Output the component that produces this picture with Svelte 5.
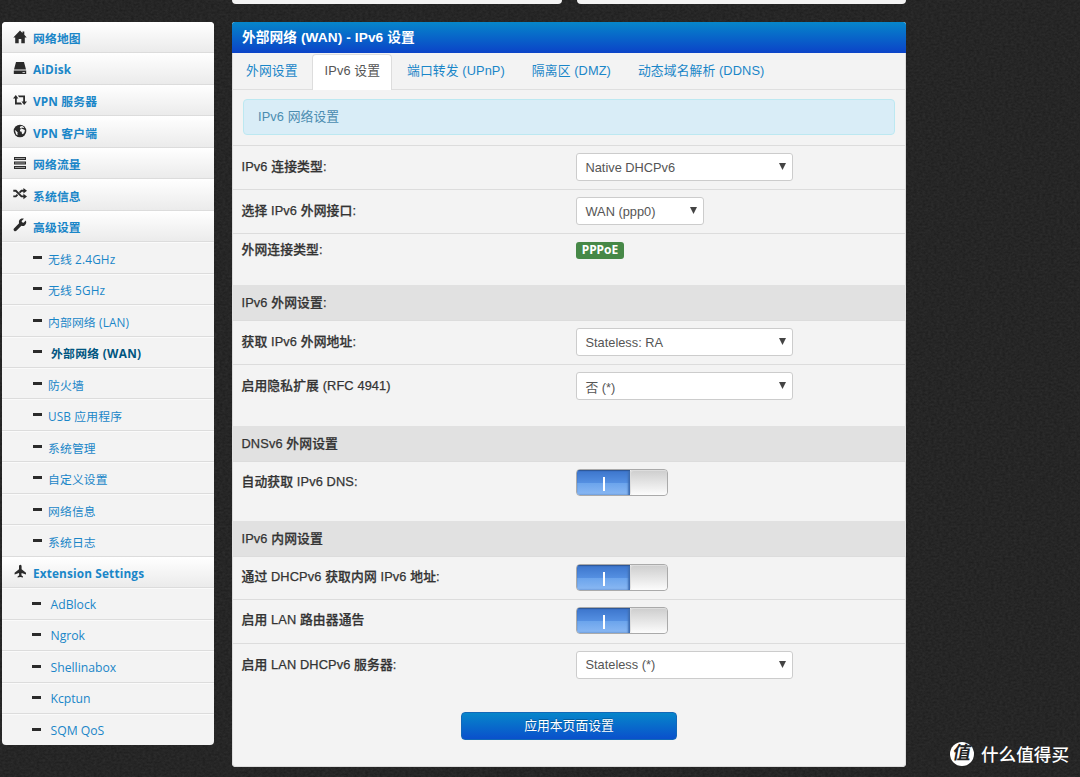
<script>
  const menu = [
    { icon: 'home', label: '网络地图' },
    { icon: 'hdd', label: 'AiDisk' },
    { icon: 'retweet', label: 'VPN 服务器' },
    { icon: 'globe', label: 'VPN 客户端' },
    { icon: 'tasks', label: '网络流量' },
    { icon: 'random', label: '系统信息' },
    { icon: 'wrench', label: '高级设置' }
  ];

  const advanced = [
    '无线 2.4GHz',
    '无线 5GHz',
    '内部网络 (LAN)',
    '外部网络 (WAN)',
    '防火墙',
    'USB 应用程序',
    '系统管理',
    '自定义设置',
    '网络信息',
    '系统日志'
  ];

  const extensions = ['AdBlock', 'Ngrok', 'Shellinabox', 'Kcptun', 'SQM QoS'];

  const tabs = ['外网设置', 'IPv6 设置', '端口转发 (UPnP)', '隔离区 (DMZ)', '动态域名解析 (DDNS)'];

  const groups = [
    {
      name: 'type',
      rows: [
        { label: 'IPv6 连接类型:', select: 'Native DHCPv6' },
        { label: '选择 IPv6 外网接口:', select: 'WAN (ppp0)', short: true },
        { label: '外网连接类型:', badge: 'PPPoE' }
      ]
    },
    {
      name: 'wan',
      title: 'IPv6 外网设置:',
      rows: [
        { label: '获取 IPv6 外网地址:', select: 'Stateless: RA' },
        { label: '启用隐私扩展 (RFC 4941)', select: '否 (*)' }
      ]
    },
    {
      name: 'dns',
      title: 'DNSv6 外网设置',
      rows: [{ label: '自动获取 IPv6 DNS:', toggle: true }]
    },
    {
      name: 'lan',
      title: 'IPv6 内网设置',
      rows: [
        { label: '通过 DHCPv6 获取内网 IPv6 地址:', toggle: true },
        { label: '启用 LAN 路由器通告', toggle: true },
        { label: '启用 LAN DHCPv6 服务器:', select: 'Stateless (*)' }
      ]
    }
  ];
</script>

{#snippet icon(name)}
  <svg class="icon" viewBox="0 0 14 14">
    {#if name === 'home'}
      <path d="M7 .5 .3 7.4h1.9v5.9h3.5V9h2.6v4.3h3.5V7.4h1.9L11.3 4.8V1.5H9.5V3z" />
    {:else if name === 'hdd'}
      <path d="M3 1h8l2 7.6H1zM.8 9.4h12.4V13H.8z" />
      <path class="cut" d="M9.5 11h2.4v.8H9.5z" />
    {:else if name === 'retweet'}
      <path d="M2.8 2 5.4 5.4H3.8v4.2h4l1.4 1.8H2V5.4H0zM4.8 2.5H12v6h2l-2.8 3.4L8.5 8.5h1.7V4.3h-4z" />
    {:else if name === 'globe'}
      <circle cx="7" cy="7" r="6.3" />
      <path class="cut" d="M7.4 2.2 9.3 2l2 1.5-1.2.5-1.2-.4-.8.9 1.5.6 2.3.9-.4 2.3-1.5 2-1-.6-.4-1.9-1.7-.6.2-1.5 1-1-1.3-.9zM1.8 6.1l1.5.9 1.4 1.4-.3 1.1.3 1.8-1.5-.9z" />
    {:else if name === 'tasks'}
      <path d="M1 1h12v3H1zM1 5.5h12v3H1zM1 10h12v3H1z" />
      <path class="cut dim" d="M2 2.1h10v.8H2zM2 6.6h10v.8H2zM2 11.1h10v.8H2z" />
    {:else if name === 'random'}
      <path d="M.3 2.8h2.9l5.7 5.6h1.5V6.7L14 9.4l-3.6 2.8v-1.9H8.1L2.4 4.7H.3zM.3 8.4h2.1l1.5-1.5 1.3 1.4-2 2H.3zM5.9 4.9l2.2-2.1h2.3V1L14 3.8l-3.6 2.7V4.7H8.9L7.2 6.3z" />
    {:else if name === 'wrench'}
      <path d="M12.8 2.4 10.5 4.7 9 4.3l-.4-1.4L10.9.8C9 .2 7.2.8 6.3 2.3c-.5 1-.5 2-.2 3L1 10.4c-1.4 1.5.9 3.8 2.4 2.4l5-5.1c1 .4 2.2.3 3.2-.3 1.5-1 2.1-3 1.2-5z" />
    {:else if name === 'plane'}
      <path d="M7.3.8c.9 0 1.3.8 1.3 1.6v2.8l4.4 3.5v1.7l-4.4-1.3-.2 2.2 1.6 1.2v1l-2.7-.5-2.7.5v-1l1.6-1.2L6 9.1l-4.4 1.3V8.7L6 5.2V2.4c0-.8.4-1.6 1.3-1.6z" />
    {/if}
  </svg>
{/snippet}

<svg class="grain" width="1080" height="777">
  <filter id="noise" x="0" y="0" width="100%" height="100%" color-interpolation-filters="sRGB">
    <feTurbulence type="fractalNoise" baseFrequency="0.35 0.5" numOctaves="2" seed="4" />
    <feColorMatrix values="0.08 0 0 0 0.108  0.08 0 0 0 0.108  0.08 0 0 0 0.108  0 0 0 0 1" />
  </filter>
  <rect width="1080" height="777" filter="url(#noise)" />
</svg>

<div class="page">
  <nav class="sidebar">
    {#each menu as item}
      <a class="item main" href="#top">{@render icon(item.icon)}{item.label}</a>
    {/each}
    {#each advanced as label}
      <a class="item sub" class:active={label === '外部网络 (WAN)'} href="#top"><i class="minus"></i>{label}</a>
    {/each}
    <a class="item main" href="#top">{@render icon('plane')}Extension Settings</a>
    {#each extensions as label}
      <a class="item sub plugin" href="#top"><i class="minus"></i>{label}</a>
    {/each}
  </nav>

  <div class="content">
    <div class="previous">
      <div class="stub"></div>
      <div class="stub"></div>
    </div>

    <main class="box">
      <h2>外部网络 (WAN) - IPv6 设置</h2>
      <div class="tabs">
        {#each tabs as tab, i}
          <a class="tab" class:current={i === 1} href="#top">{tab}</a>
        {/each}
      </div>
      <div class="alert">IPv6 网络设置</div>

      {#each groups as group}
        <section class={group.name}>
          {#if group.title}
            <h3>{group.title}</h3>
          {/if}
          {#each group.rows as row}
            <div class="row">
              <div class="label">{row.label}</div>
              <div class="control">
                {#if row.select}
                  <div class="select" class:short={row.short}>
                    <span>{row.select}</span>
                    <svg class="caret" viewBox="0 0 7 7"><path d="M0 0h7L3.5 7z" /></svg>
                  </div>
                {:else if row.badge}
                  <span class="badge">{row.badge}</span>
                {:else}
                  <div class="toggle"><div class="on"><i></i></div><div class="knob"></div></div>
                {/if}
              </div>
            </div>
          {/each}
        </section>
      {/each}

      <button>应用本页面设置</button>
    </main>
  </div>
</div>

<div class="watermark"><span class="logo"><b>值</b></span>什么值得买</div>

<style>
  :global(body) {
    background: #262626;
    overflow: hidden;
    font-family: "Liberation Sans", "Noto Sans CJK SC", sans-serif;
    font-size: 12.8px;
    color: #333;
  }

  a {
    color: #1a86c8;
    text-decoration: none;
  }

  .grain {
    position: absolute;
    top: 0;
    left: 0;
    z-index: -1;
  }

  .page {
    display: flex;
    align-items: flex-start;
    gap: 19px;
    width: 906px;
    height: 777px;
    padding-left: 2px;
    box-sizing: border-box;
  }

  .sidebar {
    width: 211.5px;
    margin-right: -0.5px;
    margin-top: 22px;
    flex: none;
    background: #f3f3f3;
    border-radius: 4px;
    overflow: hidden;
    font-family: "Open Sans", "Noto Sans CJK SC", sans-serif;
    font-size: 11.8px;
    letter-spacing: 0.15px;
  }

  .item {
    display: flex;
    align-items: center;
    height: 31.46px;
    box-sizing: border-box;
    border-bottom: 1px solid #dcdcdc;
    white-space: pre;
    padding-top: 1.5px;
  }

  .item:last-child {
    border-bottom: 0;
  }

  .main {
    padding-left: 10.5px;
    background: linear-gradient(#fff, #ebebeb);
    font-weight: 700;
  }

  .icon {
    width: 14px;
    height: 14px;
    margin-right: 6.5px;
    margin-top: -2.5px;
    fill: #2b2b2b;
  }

  .cut {
    fill: #f5f5f5;
  }

  .dim {
    opacity: 0.55;
  }

  .sub {
    padding-left: 30.5px;
    border-top: 1px solid #fafafa;
    padding-top: 1px;
  }

  .minus {
    width: 9px;
    height: 3px;
    margin-right: 6.5px;
    margin-top: -2px;
    background: #2b2b2b;
  }

  .active {
    color: #005580;
    font-weight: 700;
    letter-spacing: 0.3px;
  }

  .active .minus {
    margin-right: 9.5px;
  }

  .plugin {
    padding-left: 29.5px;
    font-size: 12.2px;
    letter-spacing: 0;
  }

  .plugin .minus {
    margin-right: 10px;
  }

  .content {
    flex: 1;
  }

  .previous {
    display: flex;
    gap: 15px;
    height: 4px;
    margin-bottom: 18px;
  }

  .stub {
    flex: 1;
    background: #f3f3f3;
    border-radius: 0 0 4px 4px;
  }

  .box {
    height: 744.5px;
    background: #f3f3f3;
    border-radius: 3px 3px 4px 4px;
    overflow: hidden;
    box-shadow: inset 0 0 0 1px #dcdcdc;
  }

  h2 {
    margin: 0;
    height: 31px;
    line-height: 31px;
    padding-left: 10px;
    background: linear-gradient(#0686ca, #0b43c8);
    color: #fff;
    font-size: 13.7px;
    font-weight: 700;
    letter-spacing: 0.08px;
  }

  .tabs {
    display: flex;
    height: 37px;
    box-sizing: border-box;
    border-bottom: 1px solid #dfdfdf;
    padding-top: 1px;
    letter-spacing: 0.1px;
  }

  .tab {
    height: 35px;
    line-height: 34px;
    padding: 0 14px 0 13px;
    white-space: nowrap;
  }

  .tab:first-child {
    padding-left: 14px;
  }

  .current {
    height: 36px;
    padding: 0 11px 0 12px;
    margin-right: 2px;
    background: #fff;
    border: 1px solid #ddd;
    border-bottom: 0;
    border-radius: 4px 4px 0 0;
    box-sizing: border-box;
    color: #555;
    line-height: 32px;
  }

  .alert {
    margin: 9px 11px 10px;
    height: 36px;
    line-height: 33px;
    box-sizing: border-box;
    padding-left: 14px;
    background: #d9edf7;
    border: 1px solid #bce8f1;
    border-radius: 4px;
    color: #4b8cb0;
    letter-spacing: 0.1px;
  }

  h3 {
    margin: 0;
    height: 35px;
    line-height: 35px;
    padding-left: 9.5px;
    background: #e1e1e1;
    font-size: 12.8px;
    font-weight: 500;
    letter-spacing: 0.12px;
    -webkit-text-stroke: 0.25px #333;
  }

  .row {
    display: flex;
    height: 44px;
    box-sizing: border-box;
    border-top: 1px solid #dcdcdc;
    padding: 7px 0 0 9.5px;
  }

  .label {
    width: 334.5px;
    line-height: 27px;
    font-weight: 500;
    letter-spacing: 0.12px;
    -webkit-text-stroke: 0.25px #333;
  }

  .type {
    height: 140px;
  }

  .type .row:last-child .label {
    line-height: 18px;
  }

  .wan {
    height: 141px;
  }

  .dns {
    height: 95px;
  }

  .dns .label,
  .lan .label {
    line-height: 25px;
  }

  .lan .row {
    height: 43.3px;
  }

  .lan .row:last-child .label {
    line-height: 27px;
  }

  .select {
    display: flex;
    align-items: center;
    justify-content: space-between;
    width: 217px;
    height: 28px;
    box-sizing: border-box;
    padding: 0 6px 0 8.5px;
    background: #fff;
    border: 1px solid #ccc;
    border-radius: 3px;
    color: #555;
  }

  .short {
    width: 128px;
  }

  .caret {
    width: 7px;
    height: 7px;
    margin-top: -1px;
    fill: #444;
  }

  .badge {
    display: block;
    width: 48px;
    height: 17px;
    margin-top: 1px;
    line-height: 16px;
    text-align: center;
    background: #468847;
    border-radius: 3px;
    color: #fff;
    font-family: "Noto Sans", sans-serif;
    font-size: 12px;
    font-weight: 700;
  }

  .toggle {
    display: flex;
    width: 92px;
    height: 27px;
    box-sizing: border-box;
    border: 1px solid #aaa;
    border-radius: 4px;
    overflow: hidden;
  }

  .on {
    display: flex;
    align-items: center;
    justify-content: center;
    width: 53px;
    background: linear-gradient(#3b74cb, #5590e2 52%, #6ba4ec 52%, #8ab8f3);
    box-shadow: inset 0 1px 1px #2d5694, inset -2px 0 2px #4070b4;
  }

  .on i {
    width: 2px;
    height: 14px;
    margin-top: 2px;
    background: #fff;
  }

  .knob {
    flex: 1;
    background: linear-gradient(#cdcdcd, #fcfcfc);
    border-radius: 3px;
    box-shadow: inset 1px 1px 0 #ddd;
  }

  button {
    display: block;
    width: 216px;
    height: 28px;
    margin: 26px 0 0 229px;
    padding: 0 0 2px;
    background: linear-gradient(#0686ca, #0a50cc);
    border: 1px solid #1268b8;
    border-radius: 4px;
    color: #fff;
    font: inherit;
    text-shadow: 0 -1px 0 rgba(0, 0, 0, 0.25);
  }

  .watermark {
    position: absolute;
    left: 950px;
    top: 740px;
    display: flex;
    align-items: center;
    gap: 7px;
    height: 26px;
    color: #fff;
    font-size: 17.6px;
    font-weight: 500;
    white-space: nowrap;
  }

  .logo {
    width: 24px;
    height: 24px;
    line-height: 23px;
    margin-top: 2px;
    border-radius: 50%;
    background: #fff;
    color: #222;
    font-size: 18px;
    text-align: center;
  }

  .logo b {
    display: block;
    transform: skewX(-10deg);
  }
</style>
